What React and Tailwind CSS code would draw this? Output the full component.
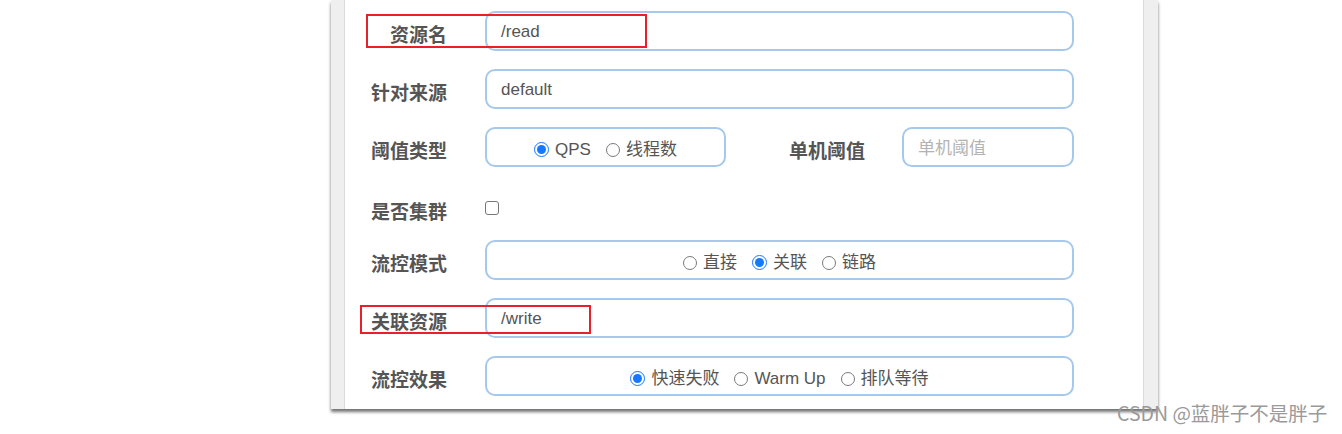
import React from "react";

const F = { fontFamily: '"Liberation Sans", "Noto Sans CJK SC", Arial, sans-serif' };
const L = { fontFamily: '"Noto Sans CJK SC", "Liberation Sans", sans-serif' };

function Radio({ checked }) {
  if (checked) {
    return (
      <span className="w-[15px] h-[15px] rounded-full border-[1.5px] border-[#1677ff] bg-white flex items-center justify-center shrink-0">
        <span className="w-[9px] h-[9px] rounded-full bg-[#1677ff]" />
      </span>
    );
  }
  return <span className="w-[14px] h-[14px] rounded-full border-[1.5px] border-[#7a7a7a] bg-white shrink-0" />;
}

function RadioGroup({ items }) {
  return (
    <div className="flex items-center justify-center h-full pt-[5px] gap-[15px]">
      {items.map((it) => (
        <span key={it.t} className="flex items-center gap-[6px]">
          <Radio checked={it.c} />
          <span className="text-[17px] text-[#555] leading-none">{it.t}</span>
        </span>
      ))}
    </div>
  );
}

function Label({ children, className = "w-[102px]" }) {
  return (
    <div style={L} className={`${className} text-right font-bold text-[19px] text-[#555] leading-none mt-[4px] shrink-0`}>
      {children}
    </div>
  );
}

const box = "h-[40px] rounded-[10px] border-2 border-[#a6c8ea] bg-white";

export default function App() {
  return (
    <div style={F} className="relative w-[1342px] h-[434px] bg-white overflow-hidden">
      <div className="ml-[331px] w-[827px] h-[409px] flex shadow-[0_3px_3px_rgba(0,0,0,0.55)]">
        <div className="w-[14px] bg-[#efefef] border-r border-[#dadada]" />
        <div className="flex-1 bg-white flex flex-col">
          <div className="flex items-center h-[40px] mt-[11px]">
            <Label>资源名</Label>
            <div className={`${box} ml-[38px] w-[589px] flex items-center pl-[14px] pt-[1px]`}>
              <span className="text-[17px] text-[#555]">/read</span>
            </div>
          </div>
          <div className="flex items-center h-[40px] mt-[18px]">
            <Label>针对来源</Label>
            <div className={`${box} ml-[38px] w-[589px] flex items-center pl-[14px] pt-[1px]`}>
              <span className="text-[17px] text-[#555]">default</span>
            </div>
          </div>
          <div className="flex items-center h-[40px] mt-[18px]">
            <Label>阈值类型</Label>
            <div className={`${box} ml-[38px] w-[241px]`}>
              <RadioGroup items={[{ t: "QPS", c: true }, { t: "线程数", c: false }]} />
            </div>
            <Label className="w-[139px]">单机阈值</Label>
            <div className={`${box} ml-[37px] w-[172px] flex items-center pl-[14px]`}>
              <span style={L} className="text-[17px] text-[#b3b3b3]">单机阈值</span>
            </div>
          </div>
          <div className="flex items-center h-[40px] mt-[21px]">
            <Label>是否集群</Label>
            <div className="ml-[38px] w-[14px] h-[14px] rounded-[3px] border-[1.5px] border-[#777] bg-white" />
          </div>
          <div className="flex items-center h-[40px] mt-[12px]">
            <Label>流控模式</Label>
            <div className={`${box} ml-[38px] w-[589px]`}>
              <RadioGroup items={[{ t: "直接", c: false }, { t: "关联", c: true }, { t: "链路", c: false }]} />
            </div>
          </div>
          <div className="flex items-center h-[40px] mt-[18px]">
            <Label>关联资源</Label>
            <div className={`${box} ml-[38px] w-[589px] flex items-center pl-[14px] pt-[1px]`}>
              <span className="text-[17px] text-[#555]">/write</span>
            </div>
          </div>
          <div className="flex items-center h-[40px] mt-[18px]">
            <Label>流控效果</Label>
            <div className={`${box} ml-[38px] w-[589px]`}>
              <RadioGroup items={[{ t: "快速失败", c: true }, { t: "Warm Up", c: false }, { t: "排队等待", c: false }]} />
            </div>
          </div>
        </div>
        <div className="w-[15px] bg-[#efefef] border-l border-[#dadada]" />
      </div>

      <div className="absolute left-[366px] top-[14px] w-[281px] h-[34px] border-2 border-[#e8202a]" />
      <div className="absolute left-[360px] top-[305px] w-[231px] h-[29px] border-2 border-[#e8202a]" />

      <div style={L} className="absolute left-[1117px] top-[403px] text-[19.5px] leading-none text-[#9a9a9a] whitespace-nowrap">
        CSDN @蓝胖子不是胖子
      </div>
    </div>
  );
}
